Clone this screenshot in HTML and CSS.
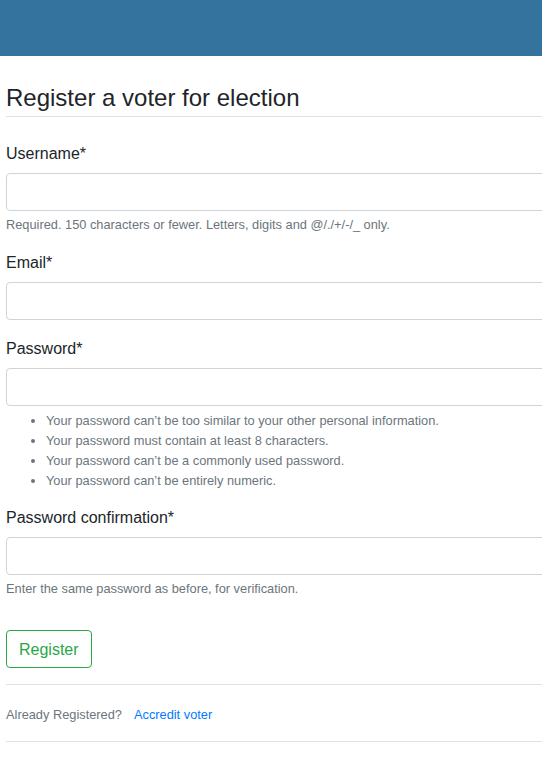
FILE: index.html
```html
<!DOCTYPE html>
<html lang="en">
<head>
<meta charset="utf-8">
<title>Register a voter for election</title>
<link rel="stylesheet" href="styles.css">
</head>
<body>
<header class="topbar"></header>
<main class="page">
  <h1 class="title">Register a voter for election</h1>
  <form class="form">
    <div class="group">
      <label class="label" for="u">Username*</label>
      <input class="input" id="u" type="text">
      <small class="help">Required. 150 characters or fewer. Letters, digits and @/./+/-/_ only.</small>
    </div>
    <div class="group">
      <label class="label" for="e">Email*</label>
      <input class="input" id="e" type="email">
    </div>
    <div class="group">
      <label class="label" for="p1">Password*</label>
      <input class="input" id="p1" type="password">
      <ul class="rules">
        <li>Your password can’t be too similar to your other personal information.</li>
        <li>Your password must contain at least 8 characters.</li>
        <li>Your password can’t be a commonly used password.</li>
        <li>Your password can’t be entirely numeric.</li>
      </ul>
    </div>
    <div class="group">
      <label class="label" for="p2">Password confirmation*</label>
      <input class="input" id="p2" type="password">
      <small class="help">Enter the same password as before, for verification.</small>
    </div>
    <div class="actions">
      <button class="btn" type="button">Register</button>
    </div>
  </form>
  <div class="footer">
    <span class="muted">Already Registered?</span>
    <a class="link" href="#">Accredit voter</a>
  </div>
</main>
</body>
</html>
```

FILE: styles.css
```css
html, body {
  margin: 0;
  padding: 0;
  overflow: hidden;
}
body {
  font-family: "Liberation Sans", Arial, sans-serif;
  font-size: 16px;
  line-height: 1.5;
  color: #212529;
  background: #fff;
}
.topbar {
  height: 56px;
  background: #35739f;
}
.page {
  padding: 0 0 0 6px;
  width: 600px;
}
.title {
  margin: 28px 0 0;
  padding-bottom: 3px;
  font-size: 24px;
  font-weight: 500;
  line-height: 1.2;
  border-bottom: 1px solid #dee2e6;
}
.form {
  padding-top: 24px;
}
.group {
  margin-bottom: 16px;
}
.label {
  display: block;
  padding-top: 1px;
  margin-bottom: 7px;
}
.input {
  display: block;
  box-sizing: border-box;
  width: 100%;
  height: 38px;
  padding: 6px 12px;
  font: inherit;
  color: #495057;
  background: #fff;
  border: 1px solid #ced4da;
  border-radius: 4px;
}
.help {
  display: block;
  margin-top: 4px;
  font-size: 12.8px;
  line-height: 1.5;
  color: #6c757d;
}
.rules {
  margin: 5px 0 -2px;
  padding-left: 40px;
  font-size: 12.8px;
  line-height: 20px;
  color: #6c757d;
}
.actions {
  padding-top: 16px;
}
.btn {
  display: block;
  box-sizing: border-box;
  height: 38px;
  padding: 1px 12px 0;
  font: inherit;
  color: #28a745;
  background: transparent;
  border: 1px solid #28a745;
  border-radius: 4px;
}
.footer {
  margin-top: 16px;
  border-top: 1px solid #dee2e6;
  border-bottom: 1px solid #dee2e6;
  padding: 20px 0 17px;
  font-size: 12.8px;
  line-height: 19px;
  display: flex;
  gap: 12px;
}
.muted {
  color: #6c757d;
}
.link {
  color: #007bff;
  text-decoration: none;
}
```
